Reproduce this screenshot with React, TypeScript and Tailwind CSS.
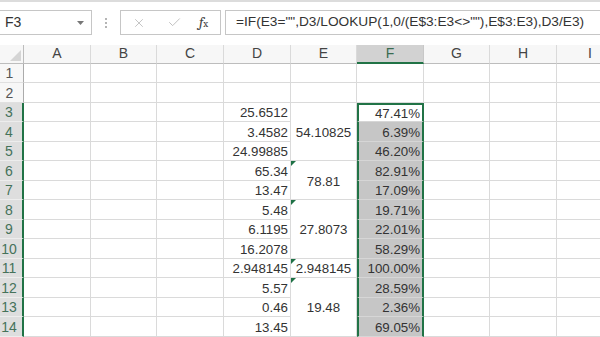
import { X, Check } from 'lucide-react';

type Row = { n: number; d?: string; e?: string; span?: number; f?: string; flag?: boolean };

const rows: Row[] = [
  { n: 1, e: '', span: 1 },
  { n: 2, e: '', span: 1 },
  { n: 3, d: '25.6512', e: '54.10825', span: 3, f: '47.41%' },
  { n: 4, d: '3.4582', f: '6.39%' },
  { n: 5, d: '24.99885', f: '46.20%' },
  { n: 6, d: '65.34', e: '78.81', span: 2, f: '82.91%', flag: true },
  { n: 7, d: '13.47', f: '17.09%' },
  { n: 8, d: '5.48', e: '27.8073', span: 3, f: '19.71%', flag: true },
  { n: 9, d: '6.1195', f: '22.01%' },
  { n: 10, d: '16.2078', f: '58.29%' },
  { n: 11, d: '2.948145', e: '2.948145', span: 1, f: '100.00%', flag: true },
  { n: 12, d: '5.57', e: '19.48', span: 3, f: '28.59%', flag: true },
  { n: 13, d: '0.46', f: '2.36%' },
  { n: 14, d: '13.45', f: '69.05%' },
  { n: 15, e: '', span: 1, flag: true },
];

const letters = ['A', 'B', 'C', 'D', 'E', 'F', 'G', 'H', 'I'];

const spanClass: Record<number, string> = { 1: 'row-span-1', 2: 'row-span-2', 3: 'row-span-3' };

function Flag() {
  return (
    <svg className="absolute left-0 top-0" width="5" height="5" viewBox="0 0 5 5">
      <polygon points="0,0 5,0 0,5" fill="#1e7145" />
    </svg>
  );
}

function FormulaBar() {
  return (
    <div className="h-[45px] border-t-2 border-[#dcdcdc] bg-white flex items-start pt-[8px]">
      <div className="w-[92px] h-[25px] border border-l-0 border-[#c6c6c6] flex items-center justify-between pl-[5px] pr-[7px] text-[14px] text-[#333]">
        <span>F3</span>
        <svg width="7" height="4" viewBox="0 0 7 4">
          <polygon points="0,0 7,0 3.5,4" fill="#777" />
        </svg>
      </div>
      <div className="w-[28px] h-[25px] flex flex-col items-center justify-center gap-[2px]">
        <span className="w-[2px] h-[2px] bg-[#b5b5b5]" />
        <span className="w-[2px] h-[2px] bg-[#b5b5b5]" />
        <span className="w-[2px] h-[2px] bg-[#b5b5b5]" />
      </div>
      <div className="w-[101px] h-[25px] border border-[#c6c6c6] flex items-center pl-[11px]">
        <X size={14} strokeWidth={1.4} color="#b8b8b8" />
        <Check size={15} strokeWidth={1.4} color="#b8b8b8" className="ml-[21px]" />
        <span className="ml-[17px] font-serif italic text-[#444] text-[15px] leading-none">
          f<span className="text-[10px] not-italic">x</span>
        </span>
      </div>
      <div className="ml-[4px] flex-1 h-[25px] border border-r-0 border-[#c6c6c6] flex items-center pl-[10px] text-[13.7px] text-[#333] whitespace-nowrap overflow-hidden">
        =IF(E3="",D3/LOOKUP(1,0/(E$3:E3&lt;&gt;""),E$3:E3),D3/E3)
      </div>
    </div>
  );
}

export default function App() {
  const cell = 'border-r border-b border-[#dadada] bg-white';
  const num = 'flex items-center justify-end pt-[3px] pr-[2px] text-[13.3px] text-[#333]';
  return (
    <div className="w-[600px] h-[337px] overflow-hidden bg-white" style={{ fontFamily: '"Liberation Sans", Arial, sans-serif' }}>
      <FormulaBar />
      <div className="grid grid-cols-[24px_67px_66px_67px_67px_66px_67px_66px_67px_67px] grid-rows-[18.5px_repeat(15,19.5px)] w-[638px]">
        {/* corner */}
        <div className="relative bg-[#f7f7f7] border-r border-b border-[#bdbdbd]">
          <svg className="absolute right-[2px] bottom-[2px]" width="11" height="11" viewBox="0 0 11 11">
            <polygon points="11,0 11,11 0,11" fill="#d5d5d5" />
          </svg>
        </div>
        {letters.map((l) =>
          l === 'F' ? (
            <div key={l} className="bg-[#d2d2d2] border-r border-[#c8c8c8] border-b-2 border-b-[#217346] flex items-center justify-center text-[14px] text-[#3a6b50]">
              {l}
            </div>
          ) : (
            <div key={l} className="bg-[#f7f7f7] border-r border-[#dadada] border-b border-b-[#bdbdbd] flex items-center justify-center text-[14px] text-[#444]">
              {l}
            </div>
          )
        )}
        {rows.map((r) => {
          const sel = r.n >= 3 && r.n <= 14;
          return [
            <div
              key={`h${r.n}`}
              className={
                sel
                  ? 'bg-[#dedede] border-b border-[#ededed] border-r-2 border-r-[#217346] flex items-center justify-center pr-[4px] pt-[2px] text-[14px] text-[#45725a]'
                  : 'bg-[#f7f7f7] border-b border-[#e0e0e0] border-r border-r-[#ababab] flex items-center justify-center pr-[4px] pt-[2px] text-[14px] text-[#555]'
              }
            >
              {r.n < 15 ? r.n : null}
            </div>,
            <div key={`a${r.n}`} className={cell} />,
            <div key={`b${r.n}`} className={cell} />,
            <div key={`c${r.n}`} className={cell} />,
            <div key={`d${r.n}`} className={`${cell} ${num}`}>
              {r.d}
            </div>,
            r.span ? (
              <div
                key={`e${r.n}`}
                className={`${cell} ${spanClass[r.span]} relative flex items-center justify-center pt-[3px] text-[13.3px] text-[#333]`}
              >
                {r.flag && <Flag />}
                {r.e}
              </div>
            ) : null,
            <div
              key={`f${r.n}`}
              className={
                sel
                  ? `border-x-2 border-[#217346] border-b border-b-[#d6d6d6] ${r.n === 3 ? 'border-t-2 bg-white' : 'bg-[#c6c6c6]'} ${num}`
                  : r.n === 15
                  ? `border-x-2 border-[#217346] bg-[#c6c6c6]`
                  : `${cell}`
              }
            >
              {r.f}
            </div>,
            <div key={`g${r.n}`} className={cell} />,
            <div key={`h2${r.n}`} className={cell} />,
            <div key={`i${r.n}`} className={cell} />,
          ];
        })}
      </div>
    </div>
  );
}
